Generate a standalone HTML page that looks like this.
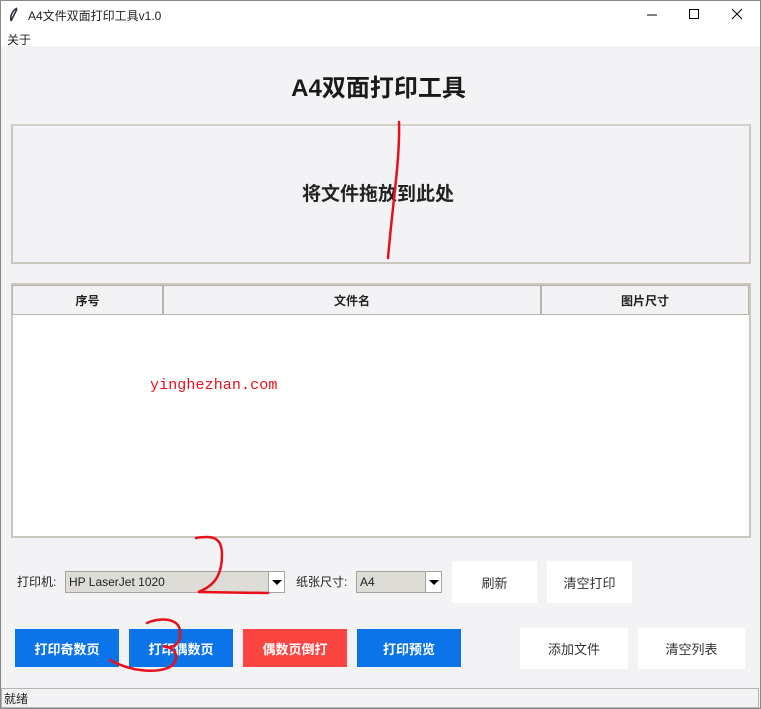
<!DOCTYPE html>
<html><head><meta charset="utf-8"><style>
*{margin:0;padding:0;box-sizing:border-box}
body{width:761px;height:709px;overflow:hidden;background:#f3f3f6;font-family:"Liberation Sans","Noto Sans CJK SC",sans-serif;position:relative;font-size:12px;color:#222}
.a{position:absolute}
.win{left:0;top:0;width:761px;height:709px;border:1px solid #888;border-top:none}
.tb{left:0;top:0;width:761px;height:30px;background:#fff;border-top:1px solid #888}
.menu{left:0;top:30px;width:761px;height:16px;background:#fff}
.btn{position:absolute;display:flex;align-items:center;justify-content:center;font-size:13px}
.bl{background:#0a74e8;color:#fff;font-weight:bold;top:629px;height:38px;width:104px}
.wh{background:#fff;color:#333}
.hd{position:absolute;top:285px;height:30px;background:#f2f2f5;border:1px solid #b8b4ac;display:flex;align-items:center;justify-content:center;font-size:12px;font-weight:bold}
.combo{position:absolute;top:571px;height:22px;background:#dedcd7;border:1px solid #a8a49c;font-size:12px;padding:3px 3px;color:#222}
.arr{position:absolute;right:0;top:0;width:16px;height:20px;background:#fff;border-left:1px solid #a8a49c}
.arr:after{content:"";position:absolute;left:3px;top:8px;border-left:5px solid transparent;border-right:5px solid transparent;border-top:5px solid #000}
</style></head><body>
<div class="a tb"></div>
<svg class="a" style="left:8px;top:7px" width="12" height="16"><path d="M9 1 C4 4 2 9 3 14 M3 14 L9 2" stroke="#334" stroke-width="1.6" fill="none"/></svg>
<div class="a" style="left:28px;top:7px;font-size:12px">A4文件双面打印工具v1.0</div>
<svg class="a" style="left:640px;top:0" width="121" height="30"><path d="M7 15h10" stroke="#000"/><path d="M49.5 9.5h9v9h-9z" stroke="#000" fill="none"/><path d="M92 9l10 10M102 9l-10 10" stroke="#000"/></svg>
<div class="a menu"></div>
<div class="a" style="left:7px;top:31px;font-size:12px">关于</div>
<div class="a" style="left:-2px;top:68px;width:761px;text-align:center;font-size:24px;font-weight:bold;color:#1a1a1a">A4双面打印工具</div>
<div class="a" style="left:11px;top:124px;width:740px;height:140px;border:2px solid #cbc7bf;border-top-color:#d6d2ca"></div>
<div class="a" style="left:8px;top:179px;width:740px;text-align:center;font-size:19px;font-weight:bold;color:#222">将文件拖放到此处</div>
<div class="a" style="left:11px;top:283px;width:740px;height:255px;background:#fff;border:2px solid #cbc7bf"></div>
<div class="hd" style="left:12px;width:151px">序号</div>
<div class="hd" style="left:163px;width:378px">文件名</div>
<div class="hd" style="left:541px;width:208px">图片尺寸</div>
<div class="a" style="left:150px;top:377px;font-family:'Liberation Mono',monospace;font-size:15px;color:#e8101a;letter-spacing:0.1px">yinghezhan.com</div>
<div class="a" style="left:17px;top:573px;font-size:12px">打印机:</div>
<div class="combo" style="left:65px;width:220px">HP LaserJet 1020<div class="arr"></div></div>
<div class="a" style="left:296px;top:573px;font-size:12px">纸张尺寸:</div>
<div class="combo" style="left:356px;width:86px">A4<div class="arr"></div></div>
<div class="btn wh" style="left:452px;top:561px;width:85px;height:42px">刷新</div>
<div class="btn wh" style="left:547px;top:561px;width:85px;height:42px">清空打印</div>
<div class="btn bl" style="left:15px">打印奇数页</div>
<div class="btn bl" style="left:129px">打印偶数页</div>
<div class="btn bl" style="left:243px;background:#fb4540">偶数页倒打</div>
<div class="btn bl" style="left:357px">打印预览</div>
<div class="btn wh" style="left:520px;top:628px;width:108px;height:41px">添加文件</div>
<div class="btn wh" style="left:638px;top:628px;width:107px;height:41px">清空列表</div>
<div class="a" style="left:1px;top:688px;width:758px;height:20px;border:1px solid #b8b4ac;font-size:12px;padding:1px 2px">就绪</div>
<div class="a win"></div>
<svg class="a" style="left:0;top:0" width="761" height="709"><g stroke="#e8101a" stroke-width="2.5" fill="none" stroke-linecap="round">
<path d="M399 122 C400 160 393 200 388 258"/>
<path d="M196 538 C214 535 222 538 222 555 C222 570 218 585 198 592 L268 593"/>
<path d="M147 623 C160 617 180 618 180 632 C182 645 170 650 163 646 C178 648 180 660 170 667 C155 674 130 671 110 660"/>
</g></svg>
</body></html>
